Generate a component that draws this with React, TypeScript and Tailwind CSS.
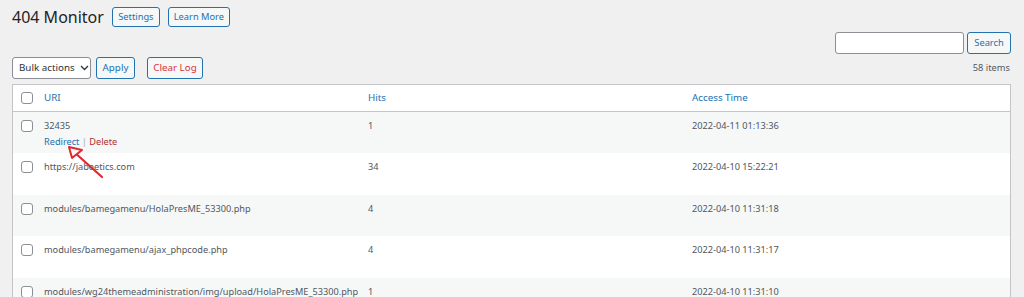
import React from "react";

type Row = { uri: string; hits: string; time: string; actions?: boolean };

const rows: Row[] = [
  { uri: "32435", hits: "1", time: "2022-04-11 01:13:36", actions: true },
  { uri: "https://jabeetics.com", hits: "34", time: "2022-04-10 15:22:21" },
  { uri: "modules/bamegamenu/HolaPresME_53300.php", hits: "4", time: "2022-04-10 11:31:18" },
  { uri: "modules/bamegamenu/ajax_phpcode.php", hits: "4", time: "2022-04-10 11:31:17" },
  { uri: "modules/wg24themeadministration/img/upload/HolaPresME_53300.php", hits: "1", time: "2022-04-10 11:31:10" },
];

const heights = ["h-[41px]", "h-[42px]", "h-[41px]", "h-[42px]", "h-[41px]"];

function Checkbox() {
  return <span className="block h-[12px] w-[12px] rounded-[3px] border border-[#8c8f94] bg-white" />;
}

function Arrow() {
  return (
    <svg className="absolute left-[62px] top-[140px]" width="46" height="42" viewBox="0 0 46 42">
      <path d="M40 37 L12 12" stroke="#e0282e" strokeWidth="2.2" strokeLinecap="round" fill="none" />
      <path d="M7 7 L20 10 L10 18 Z" stroke="#e0282e" strokeWidth="2" strokeLinejoin="round" fill="#fff5f5" />
    </svg>
  );
}

export default function App() {
  return (
    <div
      className="relative h-[297px] w-[1024px] overflow-hidden bg-[#f0f0f1] text-[9.2px] text-[#50575e]"
      style={{ fontFamily: "'Noto Sans', 'Open Sans', sans-serif" }}
    >
      <div className="mt-[7px] flex h-[20px] items-center gap-[8px] pl-[12px]">
        <h1 className="whitespace-nowrap text-[16px] leading-[20px] font-normal text-[#1d2327]">404 Monitor</h1>
        <span className="flex h-[20px] w-[48px] items-center justify-center rounded-[3px] border border-[#2271b1] bg-[#f6f7f7] text-[9.3px] text-[#2271b1]">
          Settings
        </span>
        <span className="flex h-[20px] w-[62px] items-center justify-center rounded-[3px] border border-[#2271b1] bg-[#f6f7f7] text-[9.3px] text-[#2271b1]">
          Learn More
        </span>
      </div>

      <div className="mt-[5px] flex justify-end gap-[3px] pr-[13px]">
        <span className="h-[22px] w-[129px] rounded-[3px] border border-[#8c8f94] bg-white" />
        <span className="flex h-[22px] w-[44px] items-center justify-center rounded-[3px] border border-[#2271b1] bg-[#f6f7f7] text-[9.3px] text-[#2271b1]">
          Search
        </span>
      </div>

      <div className="mt-[3px] flex h-[22px] items-center justify-between pl-[12px] pr-[14px]">
        <div className="flex items-center">
          <span className="flex h-[22px] w-[79px] items-center gap-[5px] rounded-[3px] border border-[#8c8f94] bg-white pl-[6px] text-[9.8px] text-[#2c3338]">
            Bulk actions
            <svg width="9" height="6" viewBox="0 0 9 6">
              <path d="M1 1 L4.5 4.5 L8 1" stroke="#2c3338" strokeWidth="1.3" fill="none" />
            </svg>
          </span>
          <span className="ml-[5px] flex h-[22px] w-[39px] items-center justify-center rounded-[3px] border border-[#2271b1] bg-[#f6f7f7] text-[9.8px] text-[#2271b1]">
            Apply
          </span>
          <span className="ml-[12px] flex h-[22px] w-[56px] items-center justify-center rounded-[3px] border border-[#2271b1] bg-[#f6f7f7] text-[9.8px] text-[#d63638]">
            Clear Log
          </span>
        </div>
        <span className="text-[9.3px] text-[#50575e]">58 items</span>
      </div>

      <div className="ml-[12px] mt-[5px] w-[999px] border border-[#c3c4c7] bg-white">
        <div className="grid h-[27px] grid-cols-[31px_324px_324px_1fr] items-center border-b border-[#c3c4c7] text-[9.8px] text-[#2271b1]">
          <div className="pl-[8px]">
            <Checkbox />
          </div>
          <div>URI</div>
          <div>Hits</div>
          <div>Access Time</div>
        </div>
        {rows.map((r, i) => (
          <div
            key={r.uri}
            className={`grid grid-cols-[31px_324px_324px_1fr] items-start pt-[7px] ${heights[i]} ${i % 2 === 0 ? "bg-[#f6f7f7]" : "bg-white"}`}
          >
            <div className="pl-[8px] pt-[1px]">
              <Checkbox />
            </div>
            <div className="leading-[14px]">
              <div>{r.uri}</div>
              {r.actions && (
                <div className="mt-[2px]">
                  <span className="text-[#2271b1]">Redirect</span>
                  <span className="text-[#a7aaad]"> | </span>
                  <span className="text-[#b32d2e]">Delete</span>
                </div>
              )}
            </div>
            <div className="leading-[14px]">{r.hits}</div>
            <div className="leading-[14px]">{r.time}</div>
          </div>
        ))}
      </div>

      <Arrow />
    </div>
  );
}
